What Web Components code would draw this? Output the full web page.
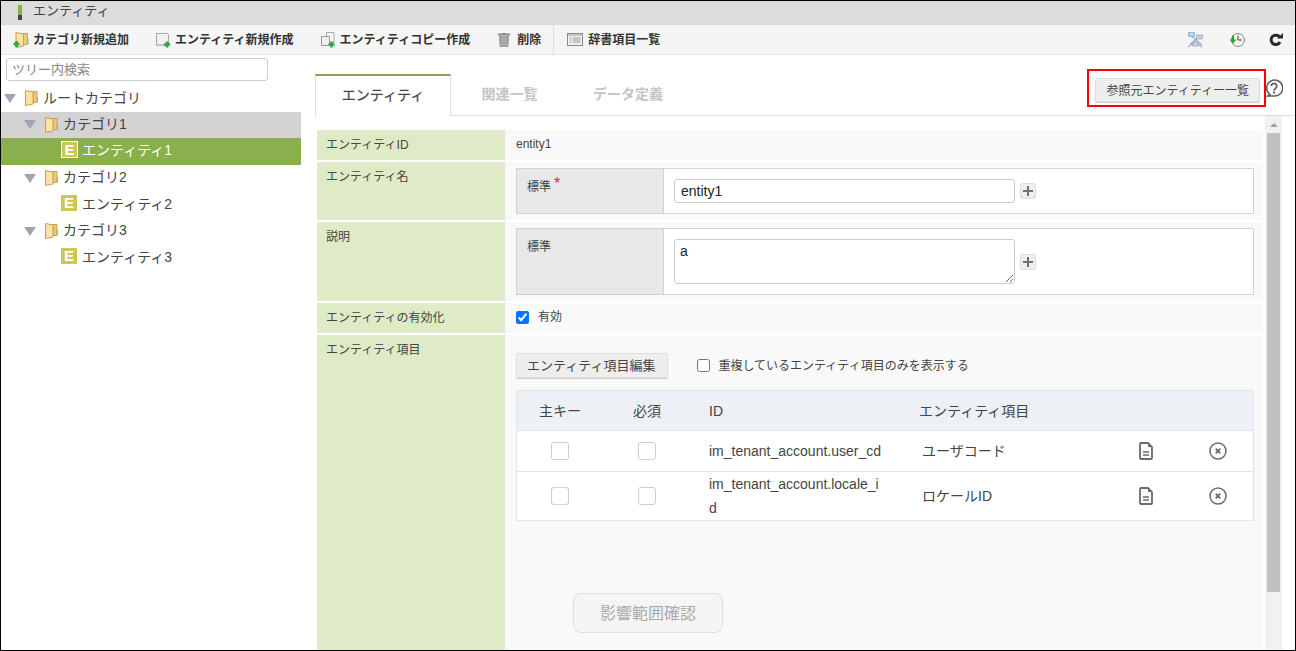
<!DOCTYPE html>
<html lang="ja">
<head>
<meta charset="utf-8">
<title>エンティティ</title>
<style>
    html, body { margin: 0; height: 100%; overflow: hidden; }
    body {
        font-family: "Liberation Sans", "Noto Sans CJK JP", sans-serif;
        color: #333;
        background: #fff;
    }
</style>
</head>
<body>
<entity-screen></entity-screen>

<script>
const FOLDER_SHAPE = `<path d="M8 1.500h4V12.500H8z" fill="#efca76" stroke="#c6a25f"/><path d="M.5.500L8 2v12L.5 15.500z" fill="#f9e3a3" stroke="#c99f58"/><path d="M12.500 7v5" stroke="#5fb4ea"/>`;

const ICONS = {
    newFolder: `<svg width="18" height="18" viewBox="0 0 18 18"><g transform="translate(2.500 1)">${FOLDER_SHAPE}</g><path d="M3.500 10v6M.5 13h6" stroke="#2fa83a" stroke-width="2.600"/></svg>`,
    newEntity: `<svg width="18" height="18" viewBox="0 0 18 18"><path d="M1.500 2.500h11l1 1v11h-12z" fill="#f1f1f1" stroke="#a8a8a8"/><path d="M2 13h11v1.500H2z" fill="#cfcfcf"/><path d="M12 10.500v6M9 13.500h6" stroke="#2fa83a" stroke-width="2.600"/></svg>`,
    copyEntity: `<svg width="18" height="18" viewBox="0 0 18 18"><path d="M6.500 1.500h7.500v10H6.500z" fill="#f5f5f5" stroke="#a8a8a8"/><path d="M1.500 5.500h8v9h-8z" fill="#eee" stroke="#999"/><path d="M11.500 10.500v6M8.500 13.500h6" stroke="#2fa83a" stroke-width="2.600"/></svg>`,
    trash: `<svg width="14" height="15" viewBox="0 0 14 15"><path d="M1 2.500h12" stroke="#8a8a8a" stroke-width="2"/><path d="M5 1h4v1H5z" fill="#8a8a8a"/><path d="M2 4h10l-.7 11H2.700z" fill="#9b9b9b"/><path d="M5 5v9M7 5v9M9 5v9" stroke="#c6c6c6" stroke-width=".8"/></svg>`,
    dictionary: `<svg width="16" height="13" viewBox="0 0 16 13"><rect x=".5" y=".5" width="15" height="12" fill="#f0f0f0" stroke="#8a8a8a"/><path d="M1 1h14v2H1z" fill="#c4c4c4"/><path d="M3 5h1M3 7h1M3 9h1" stroke="#6d9a55"/><path d="M5.500 5h8M5.500 7h8M5.500 9h8" stroke="#9a9a9a"/></svg>`,
    network: `<svg width="17" height="17" viewBox="0 0 17 17"><path d="M1 16l7-5 7 5M1 2l14 12M15 4L3 13" stroke="#555" stroke-width=".7" fill="none"/><path d="M1.500 1.500h6v4h-6zM9.500 4h6v4h-6zM5.500 11h6v4h-6z" fill="#bcd3ee" stroke="#8ba9cc" stroke-width=".8"/></svg>`,
    history: `<svg width="16" height="16" viewBox="0 0 16 16"><circle cx="9" cy="8" r="6.500" fill="#f4f4ea" stroke="#7b8a78"/><path d="M9 3.500V8h4" stroke="#444" fill="none"/><path d="M3 3.500v4H.5L4 11.500 7.500 7.500H5v-4z" fill="#27a52f"/></svg>`,
    reload: `<svg width="14" height="14" viewBox="0 0 14 14"><path d="M11 9a4.700 4.700 0 1 1 0-4.300" stroke="#2a2a2a" stroke-width="3" fill="none"/><path d="M8 5.600h6V0z" fill="#2a2a2a"/></svg>`,
    help: `<svg width="18" height="18" viewBox="0 0 18 18"><path d="M5 15.500A8 8 0 1 1 9 17H2.500z" fill="#fff" stroke="#5f5f5f" stroke-width="1.500"/><path d="M6.300 7a2.700 2.700 0 1 1 4.300 2.200c-1 .7-1.500 1.200-1.500 2.300" stroke="#5f5f5f" stroke-width="1.800" fill="none"/><path d="M8.100 12.500h2v2h-2z" fill="#5f5f5f"/></svg>`,
    folder: `<svg width="13" height="16" viewBox="0 0 13 16">${FOLDER_SHAPE}</svg>`,
    triangle: `<svg width="12" height="9" viewBox="0 0 12 9"><path d="M0 0h12L6 9z" fill="#a0a5b5"/></svg>`,
    doc: `<svg width="14" height="18" viewBox="0 0 14 18"><path d="M1 2a1 1 0 0 1 1-1h7l4 4v11a1 1 0 0 1-1 1H2a1 1 0 0 1-1-1z" fill="#fff" stroke="#6b6b6b" stroke-width="1.800"/><path d="M9 1l4 4H9z" fill="#6b6b6b"/><path d="M4 10h6M4 13h6" stroke="#6b6b6b" stroke-width="1.500"/></svg>`,
    remove: `<svg width="18" height="18" viewBox="0 0 18 18"><circle cx="9" cy="9" r="8" fill="none" stroke="#6b6b6b" stroke-width="1.500"/><path d="M6.700 6.700l4.600 4.600M11.300 6.700l-4.600 4.600" stroke="#6b6b6b" stroke-width="1.800"/></svg>`
};

class EntityScreen extends HTMLElement {
    constructor() {
        super();
        this.attachShadow({ mode: 'open' });
    }

    connectedCallback() {
        this.shadowRoot.innerHTML = `
            <style>
                :host {
                    display: flex;
                    flex-direction: column;
                    box-sizing: border-box;
                    width: 1296px;
                    height: 651px;
                    border: 1px solid #000;
                    overflow: hidden;
                }
                .split { display: flex; flex: 1; min-height: 0; }
            </style>
            <title-bar>エンティティ</title-bar>
            <tool-bar></tool-bar>
            <div class="split">
                <tree-pane></tree-pane>
                <main-pane></main-pane>
            </div>
        `;
    }
}

class TitleBar extends HTMLElement {
    constructor() {
        super();
        this.attachShadow({ mode: 'open' });
    }

    connectedCallback() {
        this.shadowRoot.innerHTML = `
            <style>
                :host {
                    display: flex;
                    align-items: flex-start;
                    height: 24px;
                    padding-left: 17px;
                    background: #dcdcdc;
                    font-size: 13px;
                    line-height: 20px;
                    color: #444;
                }
                .mark {
                    width: 4px;
                    height: 15px;
                    margin: 4px 11px 0 0;
                    background: linear-gradient(#8ab04e 0 10px, #444 10px);
                }
            </style>
            <span class="mark"></span><slot></slot>
        `;
    }
}

class ToolButton extends HTMLElement {
    constructor() {
        super();
        this.attachShadow({ mode: 'open' });
    }

    connectedCallback() {
        const icon = this.getAttribute('icon');
        this.shadowRoot.innerHTML = `
            <style>
                :host {
                    display: inline-flex;
                    align-items: center;
                    gap: var(--tool-gap, 2px);
                    font-size: 12px;
                    font-weight: bold;
                    color: #333;
                    white-space: nowrap;
                }
                svg { display: block; }
                slot { display: block; padding-bottom: 2px; }
            </style>
            ${ICONS[icon]}<slot></slot>
        `;
    }
}

class ToolBar extends HTMLElement {
    constructor() {
        super();
        this.attachShadow({ mode: 'open' });
    }

    connectedCallback() {
        this.shadowRoot.innerHTML = `
            <style>
                :host {
                    display: flex;
                    align-items: center;
                    height: 30px;
                    box-sizing: border-box;
                    padding-left: 12px;
                    padding-right: 12px;
                    background: #f5f5f5;
                    border-bottom: 1px solid #e6e6e6;
                }
                tool-button { margin-right: 26px; }
                .trash { margin-left: 1px; margin-right: 25px; --tool-gap: 6px; }
                .sep {
                    align-self: stretch;
                    width: 1px;
                    margin: 0 13px 0 -13px;
                    background: #e0e0e0;
                }
                .dict { --tool-gap: 5px; }
                .right { margin-left: auto; display: flex; align-items: center; --tool-gap: 0; }
                .right tool-button { margin: 0 0 0 25px; }
                .right tool-button:last-child { margin-left: 24px; }
            </style>
            <tool-button icon="newFolder">カテゴリ新規追加</tool-button>
            <tool-button icon="newEntity">エンティティ新規作成</tool-button>
            <tool-button icon="copyEntity">エンティティコピー作成</tool-button>
            <tool-button class="trash" icon="trash">削除</tool-button>
            <span class="sep"></span>
            <tool-button class="dict" icon="dictionary">辞書項目一覧</tool-button>
            <div class="right">
                <tool-button icon="network"></tool-button>
                <tool-button icon="history"></tool-button>
                <tool-button icon="reload"></tool-button>
            </div>
        `;
    }
}

class TreeRow extends HTMLElement {
    constructor() {
        super();
        this.attachShadow({ mode: 'open' });
    }

    connectedCallback() {
        const kind = this.getAttribute('kind') || 'category';
        const lead = kind === 'entity'
            ? `<span class="e">E</span>`
            : `${ICONS.triangle}<span class="folder">${ICONS.folder}</span>`;
        this.shadowRoot.innerHTML = `
            <style>
                :host {
                    display: flex;
                    align-items: center;
                    height: 26.6px;
                    padding-left: var(--indent, 3px);
                    font-size: 14px;
                    color: #444;
                    white-space: nowrap;
                }
                :host([active]) { background: #d3d3d3; }
                :host([selected]) { background: #8ab04e; color: #fff; }
                svg { display: block; }
                slot { display: block; padding-bottom: var(--lift, 4px); }
                .folder { margin: 0 5px 0 9px; }
                .e {
                    box-sizing: border-box;
                    width: 16px;
                    height: 16px;
                    margin: 0 5px 4px 0;
                    background: #cfc553;
                    color: #fff;
                    font: bold 15px/16px "Liberation Sans", sans-serif;
                    text-align: center;
                }
                :host([selected]) .e { width: 17px; height: 17px; margin-right: 4px; border: 1px solid #fff; line-height: 15px; }
            </style>
            ${lead}<slot></slot>
        `;
    }
}

class TreePane extends HTMLElement {
    constructor() {
        super();
        this.attachShadow({ mode: 'open' });
    }

    connectedCallback() {
        this.shadowRoot.innerHTML = `
            <style>
                :host {
                    display: block;
                    flex: none;
                    width: 300px;
                    box-sizing: border-box;
                    padding-top: 3px;
                }
                input {
                    display: block;
                    box-sizing: border-box;
                    width: 262px;
                    height: 23px;
                    margin: 0 0 4px 5px;
                    padding: 0 5px;
                    border: 1px solid #ccc;
                    border-radius: 3px;
                    font: 13px "Liberation Sans", "Noto Sans CJK JP", sans-serif;
                }
                input::placeholder { color: #888; }
                .root { --lift: 2px; }
                .cat { --indent: 23px; }
                .ent { --indent: 60px; }
            </style>
            <input placeholder="ツリー内検索">
            <tree-row class="root">ルートカテゴリ</tree-row>
            <tree-row class="cat" active>カテゴリ1</tree-row>
            <tree-row class="ent" kind="entity" selected>エンティティ1</tree-row>
            <tree-row class="cat">カテゴリ2</tree-row>
            <tree-row class="ent" kind="entity">エンティティ2</tree-row>
            <tree-row class="cat">カテゴリ3</tree-row>
            <tree-row class="ent" kind="entity">エンティティ3</tree-row>
        `;
    }
}

class TabHeader extends HTMLElement {
    constructor() {
        super();
        this.attachShadow({ mode: 'open' });
    }

    connectedCallback() {
        this.shadowRoot.innerHTML = `
            <style>
                :host {
                    display: flex;
                    align-items: flex-start;
                    height: 61px;
                    box-sizing: border-box;
                    padding: 19px 13px 0 0;
                    border-bottom: 1px solid #ddd;
                }
                .tab {
                    box-sizing: border-box;
                    height: 42px;
                    padding-top: 10px;
                    font-size: 14px;
                    line-height: 20px;
                    font-weight: bold;
                    color: #c4c4c4;
                    text-align: center;
                }
                .on {
                    width: 136px;
                    padding-top: 9px;
                    border: 1px solid #ddd;
                    border-top: 2px solid #8aa35a;
                    border-bottom: 0;
                    background: #fff;
                    color: #444;
                    font-weight: normal;
                    -webkit-text-stroke: .2px #444;
                }
                .rel { margin-left: 30px; width: 57px; }
                .def { margin-left: 54px; width: 72px; }
                .source {
                    position: relative;
                    margin: 4px 0 0 auto;
                    height: 24px;
                    box-sizing: border-box;
                    padding: 1px 10px 0;
                    background: #eee;
                    border: 1px solid #ddd;
                    border-radius: 2px;
                    box-shadow: 0 1px 1px #ccc;
                    font: 12px/22px "Liberation Sans", "Noto Sans CJK JP", sans-serif;
                    color: #444;
                    white-space: nowrap;
                }
                .source::after {
                    content: "";
                    position: absolute;
                    left: -9px;
                    right: -7px;
                    top: -10px;
                    bottom: -6px;
                    border: 2px solid #f00;
                }
                svg { display: block; margin: 5px -1px 0 5px; flex: none; }
            </style>
            <div class="tab on">エンティティ</div>
            <div class="tab rel">関連一覧</div>
            <div class="tab def">データ定義</div>
            <div class="source">参照元エンティティー一覧</div>
            ${ICONS.help}
        `;
    }
}

class FormRow extends HTMLElement {
    constructor() {
        super();
        this.attachShadow({ mode: 'open' });
    }

    connectedCallback() {
        this.shadowRoot.innerHTML = `
            <style>
                :host {
                    display: flex;
                    font-size: 12px;
                    line-height: 16px;
                    color: #444;
                    margin-bottom: 2px;
                }
                .label {
                    flex: none;
                    box-sizing: border-box;
                    width: 188px;
                    padding: 7px 9px 0;
                    background: #deebc6;
                }
                .value {
                    flex: 1;
                    min-width: 0;
                    box-sizing: border-box;
                    padding: 6px 9px 6px 11px;
                    background: #f9f9f9;
                }
            </style>
            <div class="label">${this.getAttribute('label')}</div>
            <div class="value"><slot></slot></div>
        `;
    }
}

class LangField extends HTMLElement {
    constructor() {
        super();
        this.attachShadow({ mode: 'open' });
    }

    connectedCallback() {
        const multi = this.hasAttribute('multiline');
        const mark = this.hasAttribute('required') ? `<span class="req">*</span>` : '';
        const field = multi
            ? `<textarea>${this.getAttribute('value')}</textarea>`
            : `<input value="${this.getAttribute('value')}">`;
        this.shadowRoot.innerHTML = `
            <style>
                :host {
                    display: flex;
                    box-sizing: border-box;
                    border: 1px solid #d2d2d2;
                    background: #fff;
                }
                .head {
                    flex: none;
                    box-sizing: border-box;
                    width: 147px;
                    padding: 10px 10px 0;
                    background: #e8e8e8;
                    border-right: 1px solid #d2d2d2;
                    color: #444;
                }
                .req { color: #e0245e; font-size: 16px; vertical-align: 2px; margin-left: 3px; line-height: 10px; }
                .body {
                    flex: 1;
                    display: flex;
                    align-items: center;
                    gap: 5px;
                    padding: 10px;
                }
                input, textarea {
                    display: block;
                    box-sizing: border-box;
                    width: 341px;
                    margin: 0;
                    padding: 0 6px;
                    border: 1px solid #ccc;
                    border-radius: 3px;
                    font: 14px "Liberation Sans", "Noto Sans CJK JP", sans-serif;
                    color: #222;
                }
                input { height: 24px; }
                textarea { height: 45px; padding-top: 3px; padding-left: 5px; }
                .plus {
                    flex: none;
                    width: 16px;
                    height: 16px;
                    box-sizing: border-box;
                    background: #eee;
                    border: 1px solid #ddd;
                    border-radius: 2px;
                }
                .plus svg { display: block; margin: 2px; }
            </style>
            <div class="head">標準${mark}</div>
            <div class="body">
                ${field}
                <span class="plus"><svg width="10" height="10" viewBox="0 0 10 10"><path d="M5 0v10M0 5h10" stroke="#707070" stroke-width="2"/></svg></span>
            </div>
        `;
    }
}

class CheckLabel extends HTMLElement {
    constructor() {
        super();
        this.attachShadow({ mode: 'open' });
    }

    connectedCallback() {
        const checked = this.hasAttribute('checked') ? 'checked' : '';
        this.shadowRoot.innerHTML = `
            <style>
                :host { display: inline-flex; align-items: center; gap: var(--check-gap, 9px); font-size: 12px; color: #444; }
                input { display: block; width: 13px; height: 13px; margin: 0; }
            </style>
            <input type="checkbox" ${checked}><slot></slot>
        `;
    }
}

class ItemsTable extends HTMLElement {
    constructor() {
        super();
        this.attachShadow({ mode: 'open' });
    }

    connectedCallback() {
        const items = [
            ['im_tenant_account.user_cd', 'ユーザコード'],
            ['im_tenant_account.locale_id', 'ロケールID']
        ];
        const rows = items.map(([id, name]) => `
            <div class="row">
                <span class="mid"><i class="box"></i></span>
                <span class="mid"><i class="box"></i></span>
                <span class="id">${id}</span>
                <span class="name">${name}</span>
                <span class="mid">${ICONS.doc}</span>
                <span class="mid">${ICONS.remove}</span>
            </div>
        `).join('');
        this.shadowRoot.innerHTML = `
            <style>
                :host {
                    display: block;
                    border: 1px solid #e1e6ec;
                    border-bottom: 0;
                    background: #fff;
                    font-size: 14px;
                    line-height: 24px;
                    color: #444;
                }
                .row, .head {
                    display: grid;
                    grid-template-columns: 86px 88px 228px 191px 72px 72px;
                    align-items: center;
                    min-height: 40px;
                    border-bottom: 1px solid #e1e6ec;
                }
                .head { min-height: 39px; background: #edf0f5; }
                .mid { display: flex; justify-content: center; text-align: center; }
                .id { padding: 0 37px 0 18px; word-break: break-all; }
                .name { padding-left: 3px; }
                .box {
                    display: block;
                    box-sizing: border-box;
                    width: 18px;
                    height: 18px;
                    border: 1px solid #c5d0de;
                    border-radius: 3px;
                    background: #fff;
                }
                svg { display: block; }
            </style>
            <div class="head">
                <span class="mid">主キー</span>
                <span class="mid">必須</span>
                <span class="id">ID</span>
                <span>エンティティ項目</span>
            </div>
            ${rows}
        `;
    }
}

class ScrollTrack extends HTMLElement {
    constructor() {
        super();
        this.attachShadow({ mode: 'open' });
    }

    connectedCallback() {
        this.shadowRoot.innerHTML = `
            <style>
                :host {
                    display: flex;
                    flex-direction: column;
                    align-items: center;
                    flex: none;
                    width: 17px;
                    margin-left: 2px;
                    background: #f1f1f1;
                }
                .up {
                    margin-top: 7px;
                    width: 0;
                    height: 0;
                    border: 4px solid transparent;
                    border-top: 0;
                    border-bottom: 4px solid #a3a3a3;
                }
                .thumb { width: 13px; height: 459px; margin-top: 6px; background: #c1c1c1; }
            </style>
            <span class="up"></span>
            <span class="thumb"></span>
        `;
    }
}

class MainPane extends HTMLElement {
    constructor() {
        super();
        this.attachShadow({ mode: 'open' });
    }

    connectedCallback() {
        this.shadowRoot.innerHTML = `
            <style>
                :host {
                    display: flex;
                    flex-direction: column;
                    flex: 1;
                    min-width: 0;
                    padding-left: 14px;
                }
                .body { display: flex; flex: 1; min-height: 0; padding-right: 13px; }
                .form { flex: 1; min-width: 0; padding: 14px 0 0 2px; overflow: hidden; }
                .tools { display: flex; align-items: center; margin-top: 12px; gap: 29px; }
                .edit {
                    box-sizing: border-box;
                    height: 25px;
                    padding: 0 12px 0 10px;
                    background: #eee;
                    border: 1px solid #ddd;
                    border-radius: 2px;
                    box-shadow: 0 1px 1px #ccc;
                    font-size: 13px;
                    line-height: 23px;
                    color: #444;
                    white-space: nowrap;
                }
                items-table { margin-top: 12px; }
                .impact {
                    box-sizing: border-box;
                    width: 150px;
                    height: 40px;
                    margin: 72px 0 0 57px;
                    background: #f5f5f5;
                    border: 1px solid #ddd;
                    border-radius: 8px;
                    font-size: 16px;
                    line-height: 40px;
                    color: #aaa;
                    text-align: center;
                }
            </style>
            <tab-header></tab-header>
            <div class="body">
                <div class="form">
                    <form-row label="エンティティID" style="height:30px">entity1</form-row>
                    <form-row label="エンティティ名" style="height:58px">
                        <lang-field required value="entity1" style="height:46px"></lang-field>
                    </form-row>
                    <form-row label="説明" style="height:79px">
                        <lang-field multiline value="a" style="height:67px"></lang-field>
                    </form-row>
                    <form-row label="エンティティの有効化" style="height:30px">
                        <check-label checked>有効</check-label>
                    </form-row>
                    <form-row label="エンティティ項目" style="height:330px">
                        <div class="tools">
                            <span class="edit">エンティティ項目編集</span>
                            <check-label style="--check-gap:8px">重複しているエンティティ項目のみを表示する</check-label>
                        </div>
                        <items-table></items-table>
                        <div class="impact">影響範囲確認</div>
                    </form-row>
                </div>
                <scroll-track></scroll-track>
            </div>
        `;
    }
}

customElements.define('title-bar', TitleBar);
customElements.define('tool-button', ToolButton);
customElements.define('tool-bar', ToolBar);
customElements.define('tree-row', TreeRow);
customElements.define('tree-pane', TreePane);
customElements.define('tab-header', TabHeader);
customElements.define('form-row', FormRow);
customElements.define('lang-field', LangField);
customElements.define('check-label', CheckLabel);
customElements.define('items-table', ItemsTable);
customElements.define('scroll-track', ScrollTrack);
customElements.define('main-pane', MainPane);
customElements.define('entity-screen', EntityScreen);
</script>
</body>
</html>
